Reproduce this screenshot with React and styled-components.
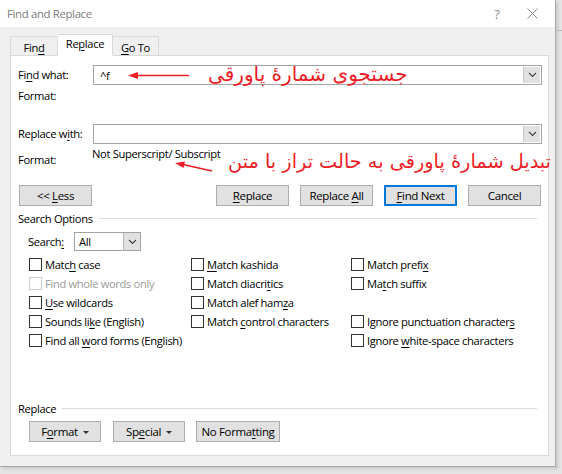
import React from "react";
import styled, { createGlobalStyle } from "styled-components";

const Global = createGlobalStyle`
  html, body { margin: 0; padding: 0; }
  body {
    width: 562px; height: 474px; overflow: hidden;
    background: #e9e9e9;
    font-family: "Segoe UI", "Open Sans", "Noto Sans", sans-serif;
    font-size: 11.2px; color: #000;
    letter-spacing: -0.35px;
  }
`;

const Window = styled.div`
  position: relative;
  width: 562px;
  height: 474px;
  background: #e4e4e4;
`;

const Dialog = styled.div`
  width: 555px;
  height: 466px;
  background: #f0f0f0;
  border-right: 1px solid #a8a8a8;
  border-bottom: 1px solid #a8a8a8;
  box-shadow: 2px 2px 3px rgba(0,0,0,0.12);
  display: flex;
  flex-direction: column;
`;

const TitleBar = styled.div`
  height: 27px;
  background: #fff;
  display: flex;
  align-items: center;
  padding-left: 7px;
  color: #7a7a7a;
  font-size: 11.4px;
`;

const TitleText = styled.div`
  flex: 1;
`;

const TitleBtn = styled.div`
  width: ${p => p.$w}px;
  display: flex;
  justify-content: center;
  align-items: center;
  color: #8a8a8a;
  font-size: 13px;
`;

const Body = styled.div`
  padding: 6px 6px 0 10px;
  display: flex;
  flex-direction: column;
`;

const TabBar = styled.div`
  height: 22px;
  display: flex;
  align-items: flex-end;
  position: relative;
  z-index: 1;
`;

const Tab = styled.div`
  width: ${p => p.$w}px;
  height: ${p => (p.$active ? 22 : 19)}px;
  box-sizing: border-box;
  border: 1px solid #d9d9d9;
  border-bottom: ${p => (p.$active ? "1px solid #fff" : "none")};
  border-left: ${p => (p.$noLeft ? "none" : "1px solid #d9d9d9")};
  background: ${p => (p.$active ? "#fff" : "#f0f0f0")};
  margin-bottom: ${p => (p.$active ? "-1px" : "0")};
  display: flex;
  align-items: center;
  justify-content: center;
  padding-top: ${p => (p.$active ? 0 : 2)}px;
  padding-bottom: ${p => (p.$active ? 3 : 0)}px;
  white-space: nowrap;
`;

const Panel = styled.div`
  position: relative;
  height: 401px;
  box-sizing: border-box;
  background: #fff;
  border: 1px solid #d9d9d9;
  padding: 0 6px 0 7px;
  display: flex;
  flex-direction: column;
`;

const Row = styled.div`
  display: flex;
  align-items: ${p => p.$align || "center"};
  height: ${p => p.$h}px;
  margin-top: ${p => p.$mt}px;
  white-space: nowrap;
`;

const Label = styled.div`
  width: ${p => (p.$w ? `${p.$w}px` : "auto")};
  flex-shrink: 0;
  line-height: 14px;
  margin-top: ${p => p.$mt || 0}px;
  padding-left: ${p => p.$pl || 0}px;
  box-sizing: border-box;
`;

const U = styled.span`
  text-decoration: underline;
  text-underline-offset: 2px;
`;

const Combo = styled.div`
  width: ${p => p.$w}px;
  height: ${p => p.$h}px;
  box-sizing: border-box;
  border: 1px solid #a3a3a3;
  display: flex;
  align-items: stretch;
  background: #fff;
`;

const ComboText = styled.div`
  flex: 1;
  display: flex;
  align-items: center;
  padding-left: ${p => p.$pl || 4}px;
`;

const ComboArrow = styled.div`
  width: ${p => p.$w}px;
  margin: ${p => p.$inset ? "1px 1px 1px 0" : "0"};
  background: #e1e1e1;
  border-left: 1px solid ${p => p.$inset ? "#c8c8c8" : "#b5b5b5"};
  display: flex;
  align-items: center;
  justify-content: center;
`;

const Chevron = () => (
  <svg width="9" height="6" viewBox="0 0 9 6">
    <path d="M1 1 L4.5 4.5 L8 1" fill="none" stroke="#404040" strokeWidth="1.1" />
  </svg>
);

const Value = styled.div`
  line-height: 14px;
  margin-top: -1px;
`;

const ButtonRow = styled.div`
  display: flex;
  justify-content: ${p => p.$justify || "space-between"};
  margin-top: ${p => p.$mt}px;
  padding-left: ${p => p.$pl}px;
  padding-right: ${p => p.$pr || 0}px;
`;

const Group = styled.div`
  display: flex;
  gap: ${p => p.$gap}px;
`;

const Button = styled.div`
  width: ${p => p.$w}px;
  height: 21px;
  box-sizing: border-box;
  background: #e1e1e1;
  border: ${p => (p.$default ? "2px solid #0078d7" : "1px solid #adadad")};
  display: flex;
  align-items: center;
  justify-content: center;
  gap: 5px;
  white-space: nowrap;
  font-size: 11.5px;
`;

const Caret = styled.span`
  width: 0; height: 0;
  border-left: 3px solid transparent;
  border-right: 3px solid transparent;
  border-top: 3px solid #333;
  margin-top: 1px;
`;

const Section = styled.div`
  display: flex;
  align-items: center;
  height: 14px;
  margin-top: ${p => p.$mt}px;
  gap: 6px;
  padding-right: 5px;
  white-space: nowrap;
  &::after {
    content: "";
    flex: 1;
    height: 1px;
    background: #dcdcdc;
  }
`;

const CheckGrid = styled.div`
  display: grid;
  grid-template-columns: 162px 160px 1fr;
  grid-auto-rows: 19px;
  margin-top: 4px;
  padding-left: 11px;
`;

const Check = styled.div`
  display: flex;
  align-items: center;
  gap: 3px;
  white-space: nowrap;
  color: ${p => (p.$disabled ? "#9b9b9b" : "#000")};
`;

const Box = styled.span`
  width: 13px;
  height: 13px;
  box-sizing: border-box;
  border: 1px solid ${p => (p.$disabled ? "#cccccc" : "#333")};
  background: #fff;
  flex-shrink: 0;
`;

const Note = styled.div`
  position: absolute;
  left: ${p => p.$x}px;
  top: ${p => p.$y}px;
  color: #ee1d25;
  font-family: "DejaVu Sans", "Noto Sans", sans-serif;
  font-size: ${p => p.$fs}px;
  letter-spacing: 0;
  line-height: 1;
  white-space: nowrap;
  direction: rtl;
`;

const Overlay = styled.svg`
  position: absolute;
  left: 0;
  top: 0;
  pointer-events: none;
`;

const OutsideMark = styled.div`
  position: absolute;
  left: 557px;
  top: 30px;
  width: 5px;
  height: 1px;
  background: #b8b8b8;
`;

const CB = ({ children, disabled }) => (
  <Check $disabled={disabled}>
    <Box $disabled={disabled} />
    <span>{children}</span>
  </Check>
);

export default function App() {
  return (
    <>
      <Global />
      <Window>
        <Dialog>
          <TitleBar>
            <TitleText>Find and Replace</TitleText>
            <TitleBtn $w={24}>?</TitleBtn>
            <TitleBtn $w={46}>
              <svg width="11" height="11" viewBox="0 0 11 11">
                <path d="M0.5 0.5 L10.5 10.5 M10.5 0.5 L0.5 10.5" stroke="#8a8a8a" strokeWidth="1" />
              </svg>
            </TitleBtn>
          </TitleBar>
          <Body>
            <TabBar>
              <Tab $w={48}><span>Fin<U>d</U></span></Tab>
              <Tab $w={55} $active $noLeft><span>Re<U>p</U>lace</span></Tab>
              <Tab $w={46} $noLeft><span><U>G</U>o To</span></Tab>
            </TabBar>
            <Panel>
              <Row $h={20} $mt={9}>
                <Label $w={75}>Fi<U>n</U>d what:</Label>
                <Combo $w={450} $h={20}>
                  <ComboText $pl={6}>^f</ComboText>
                  <ComboArrow $w={16} $inset><Chevron /></ComboArrow>
                </Combo>
              </Row>
              <Row $h={14} $mt={4}>
                <Label>Format:</Label>
              </Row>
              <Row $h={20} $mt={21}>
                <Label $w={75}>Replace w<U>i</U>th:</Label>
                <Combo $w={450} $h={20}>
                  <ComboText />
                  <ComboArrow $w={16} $inset><Chevron /></ComboArrow>
                </Combo>
              </Row>
              <Row $h={20} $mt={4} $align="flex-start">
                <Label $w={74} $mt={5}>Format:</Label>
                <Value>Not Superscript/ Subscript</Value>
              </Row>
              <ButtonRow $mt={17} $pl={1} $pr={1}>
                <Button $w={73}><span>&lt;&lt; <U>L</U>ess</span></Button>
                <Group $gap={11}>
                  <Button $w={73}><span><U>R</U>eplace</span></Button>
                  <Button $w={73}><span>Replace <U>A</U>ll</span></Button>
                  <Button $w={73} $default><span><U>F</U>ind Next</span></Button>
                  <Button $w={73}><span>Cancel</span></Button>
                </Group>
              </ButtonRow>
              <Section $mt={5}>Search Options</Section>
              <Row $h={19} $mt={7}>
                <Label $w={56} $pl={10}>Search<U>:</U></Label>
                <Combo $w={67} $h={19}>
                  <ComboText>All</ComboText>
                  <ComboArrow $w={16}><Chevron /></ComboArrow>
                </Combo>
              </Row>
              <CheckGrid>
                <CB>Matc<U>h</U> case</CB>
                <CB><U>M</U>atch kashida</CB>
                <CB>Match prefi<U>x</U></CB>
                <CB disabled>Find whole words only</CB>
                <CB>Match diacri<U>t</U>ics</CB>
                <CB>Ma<U>t</U>ch suffix</CB>
                <CB><U>U</U>se wildcards</CB>
                <CB>Match alef ham<U>z</U>a</CB>
                <span />
                <CB>Sounds li<U>k</U>e (English)</CB>
                <CB>Match <U>c</U>ontrol characters</CB>
                <CB>Ignore punctuation character<U>s</U></CB>
                <CB>Find all <U>w</U>ord forms (English)</CB>
                <span />
                <CB>Ignore <U>w</U>hite-space characters</CB>
              </CheckGrid>
              <Section $mt={51}>Replace</Section>
              <ButtonRow $mt={6} $pl={11} $justify="flex-start">
                <Group $gap={12}>
                  <Button $w={72}><span>F<U>o</U>rmat</span><Caret /></Button>
                  <Button $w={72}><span>Sp<U>e</U>cial</span><Caret /></Button>
                  <Button $w={84} style={{ marginLeft: -1 }}><span>No Forma<U>t</U>ting</span></Button>
                </Group>
              </ButtonRow>
            </Panel>
          </Body>
        </Dialog>
        <OutsideMark />
        <Note $x={208} $y={64} $fs={20}>جستجوی شمارهٔ پاورقی</Note>
        <Note $x={228} $y={152} $fs={19.3}>تبدیل شمارهٔ پاورقی به حالت تراز با متن</Note>
        <Overlay width="562" height="474" viewBox="0 0 562 474">
          <line x1="189" y1="75.5" x2="136" y2="75.5" stroke="#ee1d25" strokeWidth="1.5" />
          <polygon points="128,75.5 138,72 138,79" fill="#ee1d25" />
          <line x1="212" y1="171" x2="183" y2="164.5" stroke="#ee1d25" strokeWidth="1.5" />
          <polygon points="175,163 185,161.5 183.5,168" fill="#ee1d25" />
        </Overlay>
      </Window>
    </>
  );
}
